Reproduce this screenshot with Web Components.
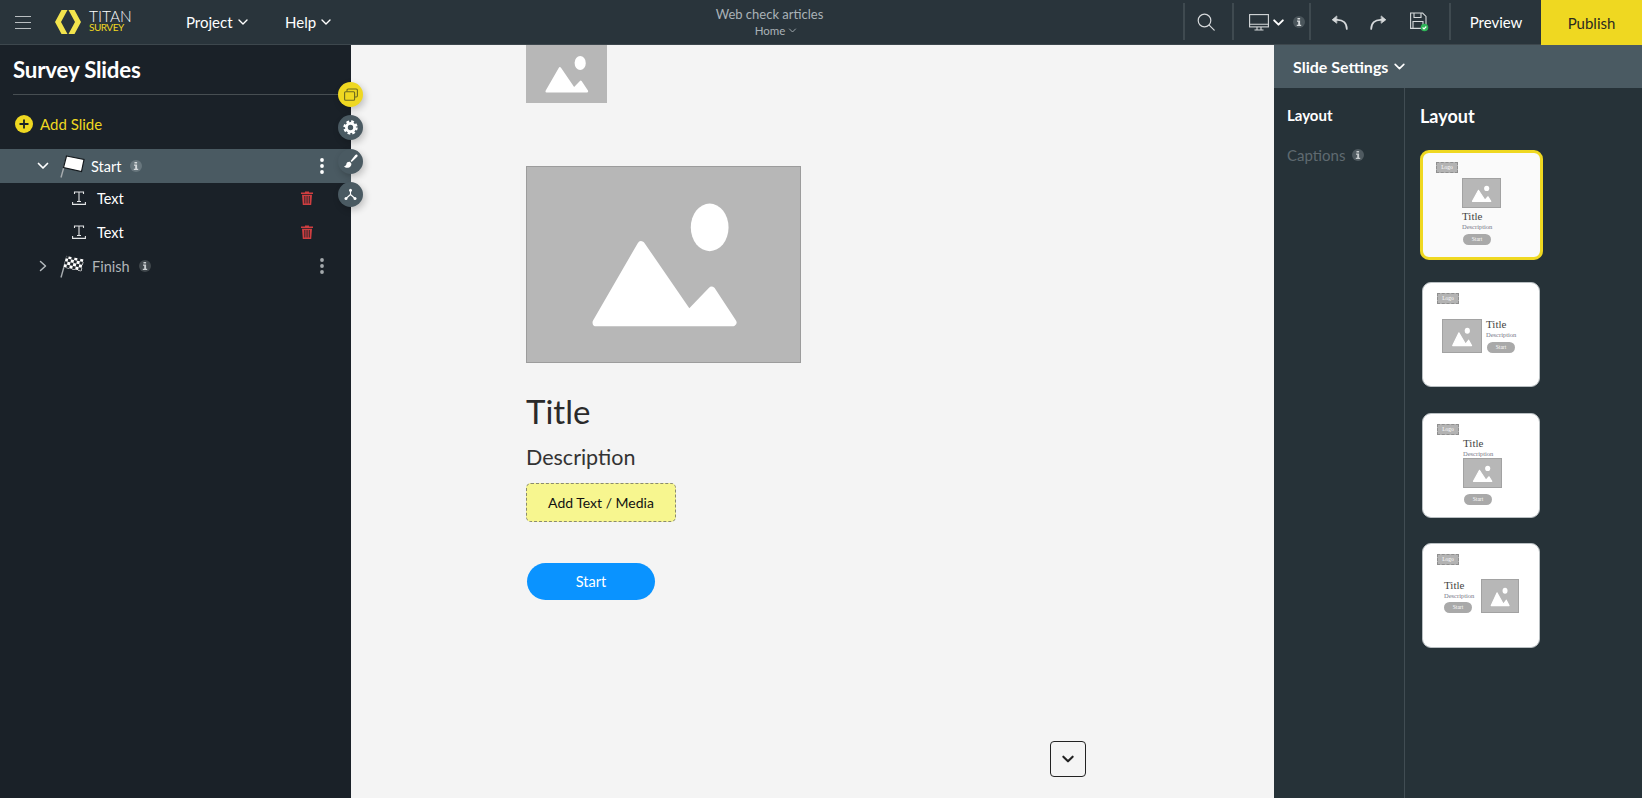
<!DOCTYPE html>
<html lang="en">
<head>
<meta charset="utf-8">
<title>Titan Survey</title>
<style>
    html, body {
        margin: 0;
        height: 100%;
        overflow: hidden;
        font-family: Lato, "Open Sans", sans-serif;
    }
</style>
</head>
<body>

<survey-app></survey-app>

<script>
const chevronDown = (size, color, width) => `<svg width="${size}" height="${size}" viewBox="0 0 12 12" fill="none" stroke="${color}" stroke-width="${width}" stroke-linecap="round" stroke-linejoin="round"><path d="M2 4l4 4 4-4"/></svg>`;
const chevronRight = `<svg width="12" height="12" viewBox="0 0 12 12" fill="none" stroke="#b5bbbf" stroke-width="1.5" stroke-linecap="round" stroke-linejoin="round"><path d="M3.5 1.5l5 4.5-5 4.5"/></svg>`;
const dots = (color) => `<svg width="4" height="16" viewBox="0 0 4 16" fill="${color}"><circle cx="2" cy="2" r="1.9"/><circle cx="2" cy="8" r="1.9"/><circle cx="2" cy="14" r="1.9"/></svg>`;

class InfoBadge extends HTMLElement {
    constructor() {
        super();
        this.attachShadow({mode: 'open'});
        this.shadowRoot.innerHTML = `
            <style>
                :host {
                    display: inline-flex;
                    width: 12px;
                    height: 12px;
                    border-radius: 50%;
                    background: var(--badge-bg, #5a666c);
                    align-items: center;
                    justify-content: center;
                }
                svg { display: block; }
            </style>
            <svg width="6" height="8" viewBox="0 0 6 8" fill="var(--badge-fg, #d5d9db)"><rect x="1.5" y="0" width="2.6" height="1.5"/><path d="M1 2.6h3.1v4.2H5.2V8H.8V6.8h1.4V3.8H1z"/></svg>
        `;
    }
}
customElements.define('info-badge', InfoBadge);

class ImagePlaceholder extends HTMLElement {
    constructor() {
        super();
        this.attachShadow({mode: 'open'});
        const round = this.hasAttribute('round');
        const sun = round ? '<ellipse cx="176" cy="66" rx="19" ry="18" fill="#fff"/>' : '<ellipse cx="184" cy="61" rx="19" ry="24" fill="#fff"/>';
        this.shadowRoot.innerHTML = `
            <style>
                :host {
                    display: block;
                    box-sizing: border-box;
                    background: #b7b7b7;
                    border: var(--ph-border, 1px solid #9c9c9c);
                }
                svg { display: block; width: 100%; height: 100%; }
            </style>
            <svg viewBox="0 0 275 197" preserveAspectRatio="none">
                ${sun}
                <path d="M70 157 L115 79 L163 149 L186 125 L207 157 Z" fill="#fff" stroke="#fff" stroke-width="8" stroke-linejoin="round"/>
            </svg>
        `;
    }
}
customElements.define('image-placeholder', ImagePlaceholder);

class RoundTool extends HTMLElement {
    constructor() {
        super();
        this.attachShadow({mode: 'open'});
        this.shadowRoot.innerHTML = `
            <style>
                :host {
                    display: flex;
                    width: 25px;
                    height: 25px;
                    border-radius: 50%;
                    background: #4a5a62;
                    align-items: center;
                    justify-content: center;
                    box-shadow: 2px 3px 7px rgba(0, 0, 0, 0.22);
                }
                :host([active]) { background: #efd821; }
            </style>
            <slot></slot>
        `;
    }
}
customElements.define('round-tool', RoundTool);

class AppHeader extends HTMLElement {
    constructor() {
        super();
        this.attachShadow({mode: 'open'});
        this.shadowRoot.innerHTML = `
            <style>
                :host {
                    display: grid;
                    grid-template-columns: 351px 1fr auto;
                    height: 45px;
                    box-sizing: border-box;
                    background: #29343b;
                    border-bottom: 1px solid #3d474d;
                    color: #fff;
                    font-size: 15px;
                }
                .left { display: flex; align-items: center; }
                .burger { display: flex; flex-direction: column; gap: 5px; margin-left: 15px; width: 16px; }
                .burger i { display: block; height: 1px; background: #b9bec1; }
                .logo { margin-left: 24px; display: block; }
                .brand { margin: -3px 0 0 8px; width: 80px; }
                .brand b { display: block; font-weight: 300; font-size: 15.5px; line-height: 14px; }
                .brand span { display: block; font-size: 10px; line-height: 9px; color: #efd821; letter-spacing: -0.5px; }
                .menu { display: flex; align-items: center; gap: 4px; }
                .project { margin-left: 17px; width: 99px; }
                .center { text-align: center; color: #a9b2b7; font-size: 13px; line-height: 16px; padding: 6px 0 0 5px; }
                .center div + div { font-size: 11.5px; line-height: 15px; margin: 1px 0 0 13px; display: flex; gap: 3px; justify-content: center; align-items: center; }
                .right { display: flex; align-items: stretch; }
                .sep { width: 2px; background: #3f4a50; margin: 3px 0 4px; }
                .tool { display: flex; align-items: center; justify-content: center; box-sizing: border-box; }
                .search { width: 47px; padding-right: 5px; }
                .device { width: 75px; gap: 3px; justify-content: flex-start; padding-left: 15px; }
                .device info-badge { margin-left: 5px; --badge-bg: #4a555b; }
                .history { width: 138px; gap: 22px; justify-content: flex-start; padding-left: 20px; }
                .preview { width: 90px; color: #fff; }
                .publish { width: 101px; background: #efd821; color: #2b2b20; margin-bottom: -1px; }
            </style>
            <div class="left">
                <div class="burger"><i></i><i></i><i></i></div>
                <svg class="logo" width="26" height="24" viewBox="0 0 26 24" fill="#f3e44d"><path d="M0 12L6.500 0H12.500L6 12l6.500 12H6.500zM26 12L19.500 0H13.500L20 12l-6.500 12H19.500z"/></svg>
                <div class="brand"><b>TITAN</b><span>SURVEY</span></div>
                <div class="menu project">Project ${chevronDown(12, '#fff', 1.4)}</div>
                <div class="menu">Help ${chevronDown(12, '#fff', 1.4)}</div>
            </div>
            <div class="center">
                <div>Web check articles</div>
                <div>Home ${chevronDown(9, '#a9b2b7', 1.2)}</div>
            </div>
            <div class="right">
                <div class="sep"></div>
                <div class="tool search">
                    <svg width="18" height="18" viewBox="0 0 18 18" fill="none" stroke="#d6d9db" stroke-width="1.2" stroke-linecap="round"><circle cx="7.500" cy="7.500" r="6.300"/><path d="M12.200 12.200l5 5"/></svg>
                </div>
                <div class="sep"></div>
                <div class="tool device">
                    <svg width="20" height="17" viewBox="0 0 20 17" fill="none" stroke="#d6d9db" stroke-width="1.1"><rect x=".6" y=".6" width="18.800" height="12.300"/><path d="M.6 10.200h18.800M8 13v2.600M12 13v2.600M5.500 16h9"/></svg>
                    ${chevronDown(13, '#fff', 1.8)}
                    <info-badge></info-badge>
                </div>
                <div class="sep"></div>
                <div class="tool history">
                    <svg width="17" height="15" viewBox="0 0 17 15" fill="none" stroke="#d6d9db" stroke-width="1.700" stroke-linecap="round" stroke-linejoin="round"><path d="M15.800 14c0-6-3.600-9.400-9.800-9.200H3"/><path d="M5.500 1.200L1.200 4.800 5.500 8z" fill="#d6d9db" stroke-width=".8"/></svg>
                    <svg width="17" height="15" viewBox="0 0 17 15" fill="none" stroke="#d6d9db" stroke-width="1.700" stroke-linecap="round" stroke-linejoin="round"><path d="M1.200 14c0-6 3.600-9.400 9.800-9.200h3"/><path d="M11.500 1.200l4.300 3.600-4.300 3.200z" fill="#d6d9db" stroke-width=".8"/></svg>
                    <svg width="20" height="20" viewBox="0 0 20 20" fill="none" stroke="#d6d9db" stroke-width="1.100"><path d="M1.600 1h12l3.400 3.400V16.400H1.600z"/><path d="M5 1v4.500h7V1M4 16.400V9.500h10v4"/><circle cx="15.500" cy="15.500" r="3.800" fill="#2fb457" stroke="none"/><path d="M13.600 15.500l1.400 1.400 2.300-2.400" stroke="#fff"/></svg>
                </div>
                <div class="sep"></div>
                <div class="tool preview">Preview</div>
                <div class="tool publish">Publish</div>
            </div>
        `;
    }
}
customElements.define('app-header', AppHeader);

class TreeRow extends HTMLElement {
    constructor() {
        super();
        this.attachShadow({mode: 'open'});
        this.shadowRoot.innerHTML = `
            <style>
                :host {
                    display: flex;
                    align-items: center;
                    box-sizing: border-box;
                    height: 34px;
                    color: #fff;
                    font-size: 14.5px;
                }
                :host([selected]) { background: #4a5a62; }
                :host([muted]) { color: #b0b5b8; }
                :host([tight]) { height: 32px; padding-bottom: 2px; }
                .arrow { width: 12px; margin-left: 37px; display: flex; }
                .icon { margin-left: 11px; display: flex; }
                .label { margin-left: 6px; }
                :host([child]) .label { margin-left: 11px; }
                :host([child]) .icon { margin-left: 23px; }
                .badge { margin-left: 9px; display: flex; }
                .end { margin-left: auto; display: flex; }
            </style>
            <span class="arrow"><slot name="arrow"></slot></span>
            <span class="icon"><slot name="icon"></slot></span>
            <span class="label"><slot></slot></span>
            <span class="badge"><slot name="badge"></slot></span>
            <span class="end"><slot name="end"></slot></span>
        `;
    }
}
customElements.define('tree-row', TreeRow);

class SlideSidebar extends HTMLElement {
    constructor() {
        super();
        this.attachShadow({mode: 'open'});
        const textIcon = `<svg slot="icon" width="14" height="14" viewBox="0 0 14 14" fill="none" stroke="#e4e6e7" stroke-width="1.100"><path d="M2.500 3V1h9v2M7 1v9.500M5 10.500h4"/><path d="M.6 11v2.400h12.800V11"/></svg>`;
        const trash = `<svg slot="end" style="margin-right:38px" width="12" height="14" viewBox="0 0 12 14" fill="#cf3e40"><path d="M0 1.500h4V.4h4v1.100h4V3H0z"/><path d="M1 3.700h10L10.200 14H1.800zM3.400 5v7.500h.9V5zM5.600 5v7.500h.9V5zM7.800 5v7.500h.9V5z" fill-rule="evenodd"/></svg>`;
        this.shadowRoot.innerHTML = `
            <style>
                :host {
                    display: block;
                    position: relative;
                    width: 351px;
                    background: #1a2128;
                    color: #fff;
                }
                h1 {
                    margin: 0 13px 0 13px;
                    padding: 10px 0 9px;
                    font-size: 22.3px;
                    line-height: 30px;
                    font-weight: 700;
                    letter-spacing: -0.2px;
                    border-bottom: 1px solid #474e52;
                }
                .add {
                    display: flex;
                    align-items: center;
                    gap: 7px;
                    margin: 18px 0 0 15px;
                    height: 22px;
                    color: #efd821;
                    font-size: 15px;
                }
                .tree { margin-top: 14px; }
                .tools {
                    position: absolute;
                    left: 338px;
                    top: 37px;
                    display: flex;
                    flex-direction: column;
                    gap: 8.3px;
                    z-index: 2;
                }
                svg { display: block; }
            </style>
            <h1>Survey Slides</h1>
            <div class="add">
                <svg width="18" height="18" viewBox="0 0 18 18"><circle cx="9" cy="9" r="9" fill="#efd821"/><path d="M9 4.500v9M4.500 9h9" stroke="#1a2128" stroke-width="1.800"/></svg>
                Add Slide
            </div>
            <div class="tree">
                <tree-row selected>
                    <svg slot="arrow" width="12" height="12" viewBox="0 0 12 12" fill="none" stroke="#fff" stroke-width="1.700" stroke-linecap="round" stroke-linejoin="round"><path d="M1.500 3.500l4.500 4.500 4.500-4.500"/></svg>
                    <svg slot="icon" width="25" height="24" viewBox="0 0 25 24"><path d="M1 23.500L7 2" stroke="#a8adb0" stroke-width="1.400"/><path d="M6.500 2L24 5.500 21.500 17.500 3.500 13.500z" fill="#fff" stroke="#14191d" stroke-width="1.200"/></svg>
                    Start
                    <info-badge slot="badge" style="--badge-bg:#68767d"></info-badge>
                    <span slot="end" style="margin-right:27px;display:flex">${dots('#fff')}</span>
                </tree-row>
                <tree-row child tight>${textIcon}Text${trash}</tree-row>
                <tree-row child>${textIcon}Text${trash}</tree-row>
                <tree-row muted>
                    <span slot="arrow" style="display:flex">${chevronRight}</span>
                    <svg slot="icon" width="25" height="24" viewBox="0 0 25 24">
                        <defs><pattern id="chk" width="6" height="6" patternUnits="userSpaceOnUse" patternTransform="rotate(12)"><rect width="6" height="6" fill="#fff"/><rect width="3" height="3" fill="#23292e"/><rect x="3" y="3" width="3" height="3" fill="#23292e"/></pattern></defs>
                        <path d="M1 23.500L7 2" stroke="#a8adb0" stroke-width="1.400"/><path d="M6.500 2L24 5.500 21.500 17.500 3.500 13.500z" fill="url(#chk)"/>
                    </svg>
                    <span style="margin-left:1px">Finish</span>
                    <info-badge slot="badge" style="--badge-bg:#40474c;--badge-fg:#c9cdcf"></info-badge>
                    <span slot="end" style="margin-right:27px;display:flex">${dots('#a4a9ac')}</span>
                </tree-row>
            </div>
            <div class="tools">
                <round-tool active><svg width="14" height="13" viewBox="0 0 14 13" fill="none" stroke="#6c6a20" stroke-width="1.100"><rect x=".6" y="3.800" width="10" height="8.400" rx="1"/><path d="M3 3.600V2.200c0-.8.400-1.200 1.200-1.200h8c.7 0 1.200.4 1.200 1.200v5.600c0 .7-.5 1.200-1.200 1.200h-1.500"/></svg></round-tool>
                <round-tool><svg width="15" height="15" viewBox="0 0 15 15"><circle cx="7.500" cy="7.500" r="4.100" fill="none" stroke="#fff" stroke-width="2.800"/><circle cx="7.500" cy="7.500" r="6" fill="none" stroke="#fff" stroke-width="2.400" stroke-dasharray="2.700 2"/></svg></round-tool>
                <round-tool><svg width="15" height="15" viewBox="0 0 15 15" fill="#fff"><path d="M14.200.8c-.6-.6-1.400-.4-1.900.2L7.600 7l1.100 1.100 5.500-5.300c.6-.5.6-1.400 0-2z"/><path d="M6.800 7.700c-1.800-.2-3.200.7-3.400 2.300-.2 1.300-1 2.100-2.400 2.500 1.500 1.500 4.900 1.900 6.600-.3.800-1 .9-2 .6-3z"/></svg></round-tool>
                <round-tool><svg width="13" height="13" viewBox="0 0 13 13" fill="#fff" stroke="#fff"><path d="M6.500 3v3.500L2 10.500M6.500 6.500l4.500 4" fill="none" stroke-width="1.100"/><circle cx="6.500" cy="2.300" r="1.500" stroke="none"/><circle cx="2" cy="10.500" r="1.500" stroke="none"/><circle cx="11" cy="10.500" r="1.500" stroke="none"/></svg></round-tool>
            </div>
        `;
    }
}
customElements.define('slide-sidebar', SlideSidebar);

class SurveyCanvas extends HTMLElement {
    constructor() {
        super();
        this.attachShadow({mode: 'open'});
        this.shadowRoot.innerHTML = `
            <style>
                :host {
                    display: block;
                    position: relative;
                    background: #f4f4f4;
                    padding-left: 175px;
                    color: #2a2a2a;
                    overflow: hidden;
                }
                .logo { width: 81px; height: 58px; --ph-border: 0; }
                .hero { width: 275px; height: 197px; margin-top: 63px; }
                h2 { margin: 29px 0 0; font-size: 33px; line-height: 38px; font-weight: 400; }
                p { margin: 14px 0 0; font-size: 21.5px; line-height: 26px; color: #333; }
                .add {
                    box-sizing: border-box;
                    width: 150px;
                    height: 39px;
                    margin-top: 13px;
                    background: #f7f68f;
                    border: 1px dashed #8a8a70;
                    border-radius: 5px;
                    display: flex;
                    align-items: center;
                    justify-content: center;
                    color: #111;
                    font-size: 14px;
                }
                .start {
                    width: 128px;
                    height: 37px;
                    margin: 41px 0 0 1px;
                    background: #0a93ff;
                    border-radius: 19px;
                    display: flex;
                    align-items: center;
                    justify-content: center;
                    color: #fff;
                    font-size: 14.5px;
                }
                .scroll {
                    position: absolute;
                    left: 699px;
                    top: 696px;
                    box-sizing: border-box;
                    width: 36px;
                    height: 36px;
                    border: 1px solid #222;
                    border-radius: 4px;
                    display: flex;
                    align-items: center;
                    justify-content: center;
                }
            </style>
            <image-placeholder class="logo"></image-placeholder>
            <image-placeholder class="hero"></image-placeholder>
            <h2>Title</h2>
            <p>Description</p>
            <div class="add">Add Text / Media</div>
            <div class="start">Start</div>
            <div class="scroll">${chevronDown(14, '#222', 1.8)}</div>
        `;
    }
}
customElements.define('survey-canvas', SurveyCanvas);

class LayoutCard extends HTMLElement {
    constructor() {
        super();
        this.attachShadow({mode: 'open'});
        const variant = this.getAttribute('variant') || 'top';
        const image = `<image-placeholder class="pic" round></image-placeholder>`;
        const title = `<div class="title">Title</div>`;
        const desc = `<div class="desc">Description</div>`;
        const btn = `<div class="btn">Start</div>`;
        const bodies = {
            top: `<div class="col">${image}${title}${desc}${btn}</div>`,
            left: `<div class="row">${image}<div class="col">${title}${desc}${btn}</div></div>`,
            middle: `<div class="col">${title}${desc}${image}${btn}</div>`,
            right: `<div class="row"><div class="col">${title}${desc}${btn}</div>${image}</div>`
        };
        this.shadowRoot.innerHTML = `
            <style>
                :host {
                    display: block;
                    box-sizing: border-box;
                    width: 118px;
                    height: 105px;
                    margin-left: 2px;
                    padding: 10px 0 0 14px;
                    background: #fff;
                    border-radius: 9px;
                    border: 1px solid #b9bfc2;
                    font-family: "Liberation Serif", serif;
                    color: #444;
                    --ph-border: 1px solid #a2a2a2;
                }
                :host([selected]) {
                    width: 123px;
                    height: 110px;
                    margin-left: 0;
                    padding: 9px 0 0 13px;
                    background: #fafafa;
                    border: 3px solid #efd821;
                }
                .logo {
                    box-sizing: border-box;
                    width: 22px;
                    height: 11px;
                    background: #b3b3b3;
                    border: 1px dashed #8f8f8f;
                    color: #fff;
                    font-size: 5.5px;
                    line-height: 9px;
                    text-align: center;
                }
                .title { font-size: 11px; line-height: 11px; margin-top: 3px; }
                .desc { font-size: 6.5px; line-height: 7px; margin-top: 1px; color: #778; white-space: nowrap; }
                .btn {
                    box-sizing: border-box;
                    width: 28px;
                    height: 11px;
                    margin: 4px 0 0 1px;
                    border-radius: 6px;
                    background: #a9a9a9;
                    color: #fff;
                    font-size: 5.5px;
                    line-height: 11px;
                    text-align: center;
                }
                .pic { width: 39px; height: 30px; }
                .col { margin: 5px 0 0 26px; width: 45px; }
                .row { display: flex; }
                :host([variant="left"]) .pic { width: 40px; height: 34px; }
                :host([variant="left"]) .row { margin: 15px 0 0 5px; gap: 4px; }
                :host([variant="left"]) .col { margin: 0; }
                :host([variant="left"]) .title { margin-top: 0; }
                :host([variant="middle"]) .col { margin-top: 3px; }
                :host([variant="middle"]) .title { margin-top: 0; }
                :host([variant="middle"]) .desc { margin-bottom: 1px; }
                :host([variant="middle"]) .btn { margin-top: 6px; }
                :host([variant="right"]) .row { margin: 14px 0 0 7px; gap: 8px; }
                :host([variant="right"]) .col { margin: 1px 0 0; width: 29px; }
                :host([variant="right"]) .title { margin-top: 0; }
                :host([variant="right"]) .btn { margin: 3px 0 0; }
                :host([variant="right"]) .pic { height: 34px; width: 38px; }
            </style>
            <div class="logo">Logo</div>
            ${bodies[variant]}
        `;
    }
}
customElements.define('layout-card', LayoutCard);

class SettingsPanel extends HTMLElement {
    constructor() {
        super();
        this.attachShadow({mode: 'open'});
        this.shadowRoot.innerHTML = `
            <style>
                :host {
                    display: grid;
                    grid-template-rows: 43px 1fr;
                    grid-template-columns: 131px 1fr;
                    background: #263238;
                    color: #fff;
                    min-height: 0;
                }
                .head {
                    grid-column: 1 / 3;
                    background: #4a5a62;
                    display: flex;
                    align-items: center;
                    gap: 5px;
                    padding: 0 0 0 19px;
                    font-size: 16px;
                    font-weight: 700;
                }
                nav {
                    border-right: 1px solid #414d53;
                    padding: 15px 0 0 13px;
                    font-size: 15px;
                }
                nav div { height: 24px; line-height: 24px; font-weight: 700; }
                nav div + div {
                    margin-top: 16px;
                    color: #5f6a70;
                    font-weight: 400;
                    display: flex;
                    align-items: center;
                    gap: 7px;
                }
                nav info-badge { --badge-bg: #4f5a60; --badge-fg: #c5cacc; }
                .content { padding: 16px 0 0 15px; }
                h3 { margin: 0 0 22px; font-size: 18px; line-height: 24px; font-weight: 700; }
                .list { display: flex; flex-direction: column; gap: 25px; align-items: flex-start; }
                .list layout-card:first-child { margin-bottom: -3px; }
                .list layout-card:nth-child(2) { margin-bottom: 1px; }
            </style>
            <div class="head">Slide Settings ${chevronDown(13, '#fff', 1.5)}</div>
            <nav>
                <div>Layout</div>
                <div>Captions <info-badge></info-badge></div>
            </nav>
            <div class="content">
                <h3>Layout</h3>
                <div class="list">
                    <layout-card variant="top" selected></layout-card>
                    <layout-card variant="left"></layout-card>
                    <layout-card variant="middle"></layout-card>
                    <layout-card variant="right"></layout-card>
                </div>
            </div>
        `;
    }
}
customElements.define('settings-panel', SettingsPanel);

class SurveyApp extends HTMLElement {
    constructor() {
        super();
        this.attachShadow({mode: 'open'});
        this.shadowRoot.innerHTML = `
            <style>
                :host {
                    display: grid;
                    grid-template-rows: 45px 1fr;
                    height: 100vh;
                    font-family: Lato, "Open Sans", sans-serif;
                }
                .body {
                    display: grid;
                    grid-template-columns: 351px 1fr 368px;
                    min-height: 0;
                }
            </style>
            <app-header></app-header>
            <div class="body">
                <slide-sidebar></slide-sidebar>
                <survey-canvas></survey-canvas>
                <settings-panel></settings-panel>
            </div>
        `;
    }
}
customElements.define('survey-app', SurveyApp);
</script>
</body>
</html>
